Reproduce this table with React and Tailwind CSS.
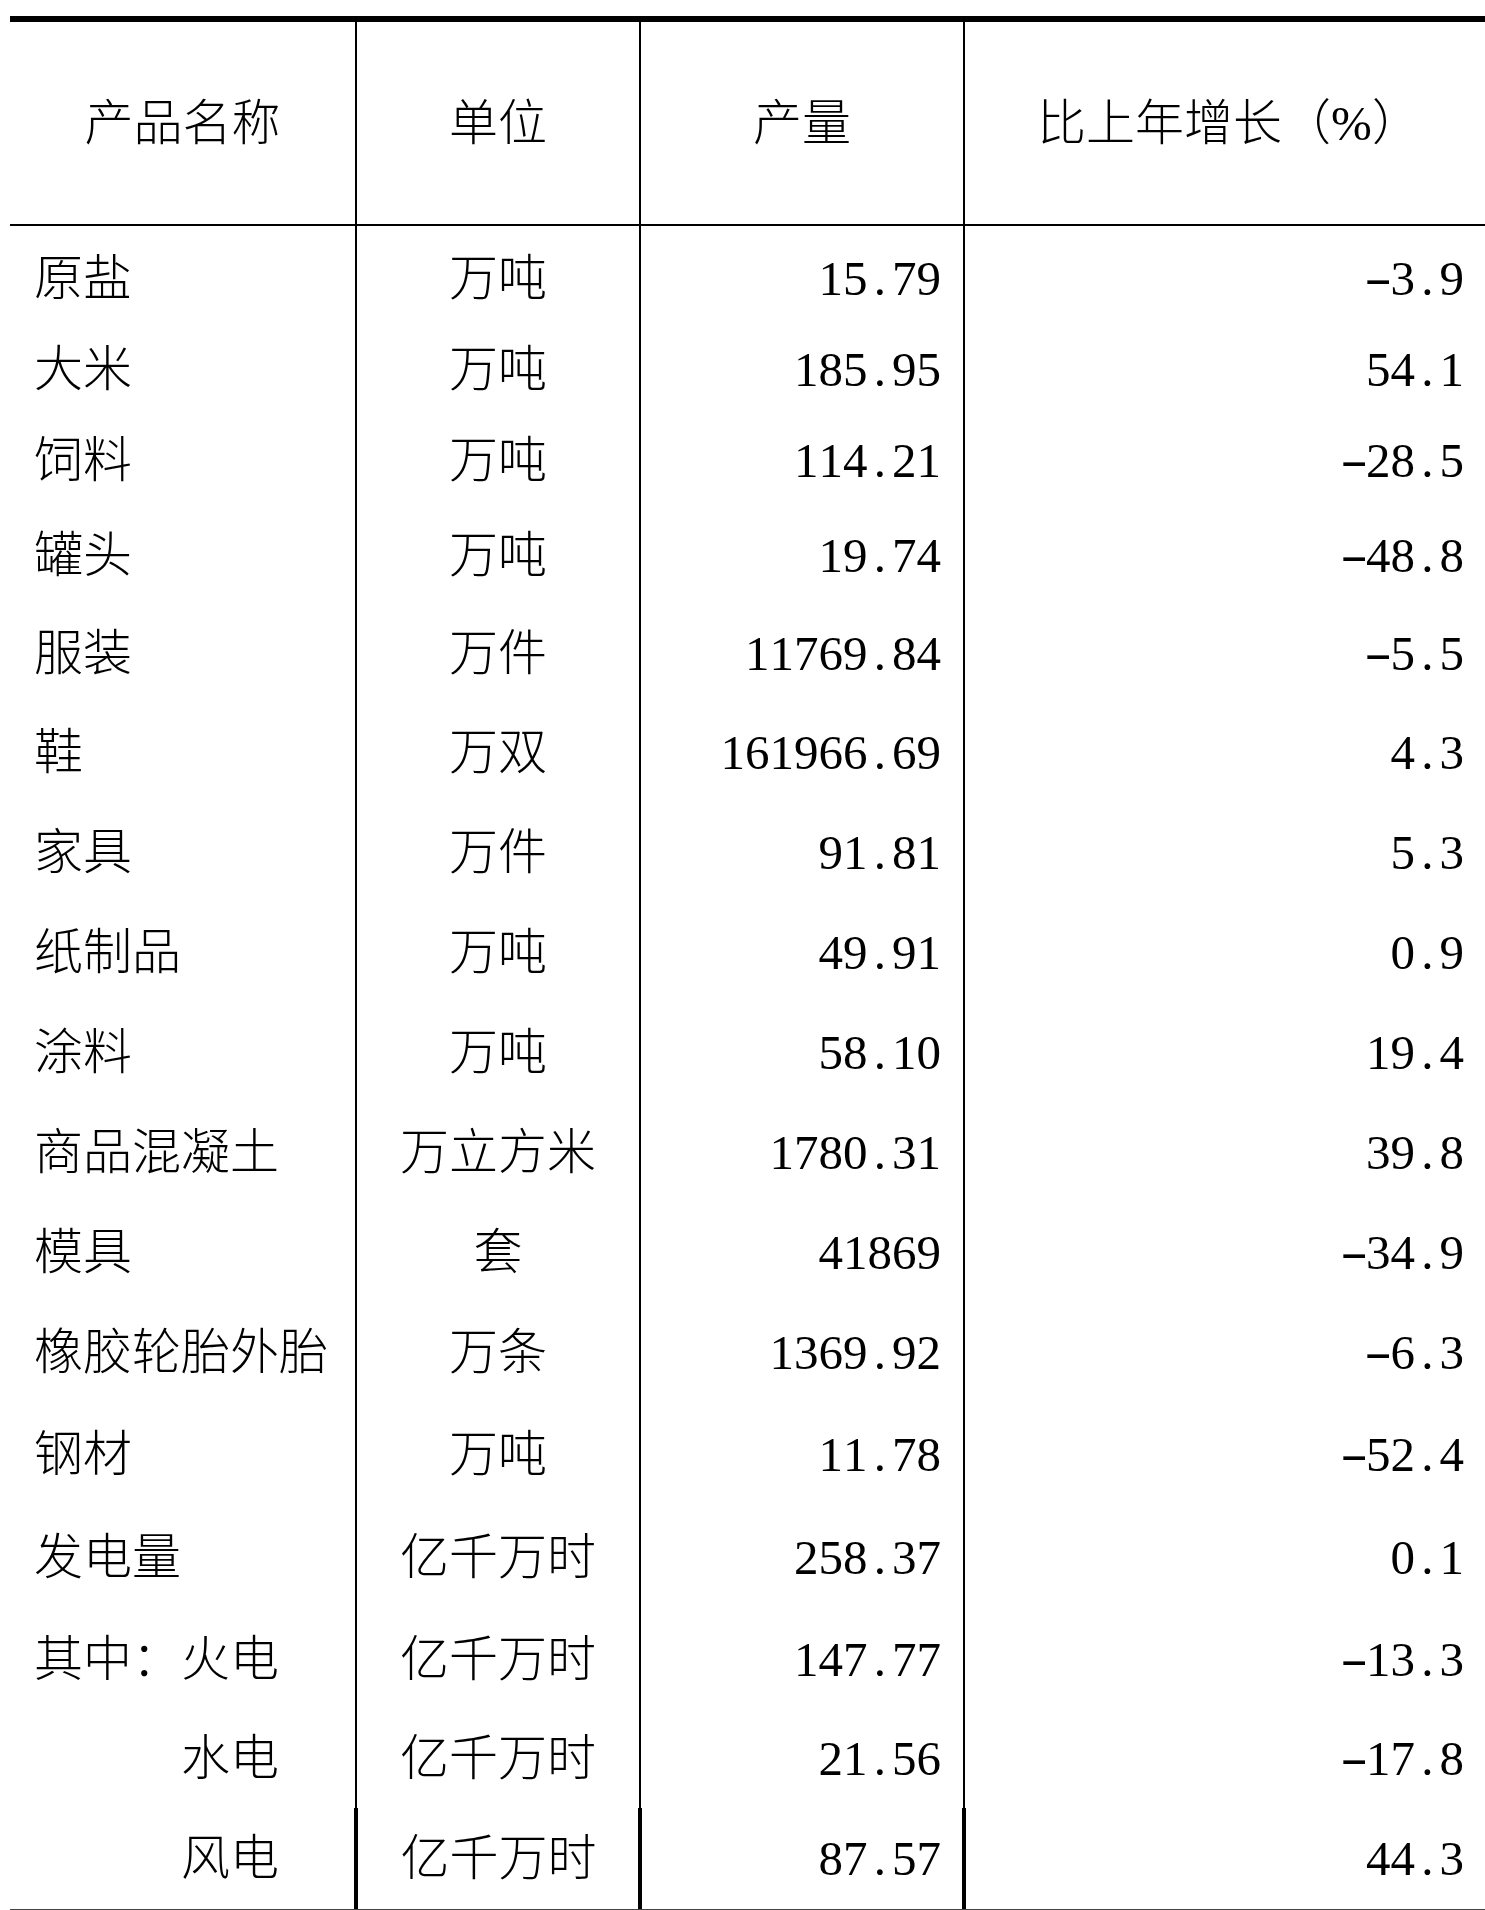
import React from 'react';

// 主要工业产品产量表
const rows = [
  { name: '原盐', unit: '万吨', output: '15.79', growth: '-3.9', h: 'h-[98px]', pad: 'pt-[6px]' },
  { name: '大米', unit: '万吨', output: '185.95', growth: '54.1', h: 'h-[90px]' },
  { name: '饲料', unit: '万吨', output: '114.21', growth: '-28.5', h: 'h-[93px]' },
  { name: '罐头', unit: '万吨', output: '19.74', growth: '-48.8', h: 'h-[97px]' },
  { name: '服装', unit: '万件', output: '11769.84', growth: '-5.5', h: 'h-[99px]' },
  { name: '鞋', unit: '万双', output: '161966.69', growth: '4.3', h: 'h-[99px]' },
  { name: '家具', unit: '万件', output: '91.81', growth: '5.3', h: 'h-[100px]' },
  { name: '纸制品', unit: '万吨', output: '49.91', growth: '0.9', h: 'h-[100px]' },
  { name: '涂料', unit: '万吨', output: '58.10', growth: '19.4', h: 'h-[100px]' },
  { name: '商品混凝土', unit: '万立方米', output: '1780.31', growth: '39.8', h: 'h-[100px]' },
  { name: '模具', unit: '套', output: '41869', growth: '-34.9', h: 'h-[100px]' },
  { name: '橡胶轮胎外胎', unit: '万条', output: '1369.92', growth: '-6.3', h: 'h-[101px]' },
  { name: '钢材', unit: '万吨', output: '11.78', growth: '-52.4', h: 'h-[103px]' },
  { name: '发电量', unit: '亿千万时', output: '258.37', growth: '0.1', h: 'h-[103px]' },
  { name: '其中：火电', unit: '亿千万时', output: '147.77', growth: '-13.3', h: 'h-[100px]' },
  { name: '水电', unit: '亿千万时', output: '21.56', growth: '-17.8', h: 'h-[99px]', indent: true },
  { name: '风电', unit: '亿千万时', output: '87.57', growth: '44.3', h: 'h-[101px]', indent: true, last: true },
];

const cjk = "font-['Liberation_Serif','Noto_Sans_CJK_SC',serif]";
const num = "font-['Liberation_Serif',serif]";

// half-width fixed cells, like the Song typeface digits
function Num({ value }) {
  return (
    <span className={`${num} flex`}>
      {value.split('').map((ch, i) => (
        <span
          key={i}
          className={
            ch === '-'
              ? 'inline-block w-[0.5em] text-center scale-x-[1.7] -translate-y-[1px]'
              : 'inline-block w-[0.5em] text-center'
          }
        >
          {ch}
        </span>
      ))}
    </span>
  );
}

export default function App() {
  return (
    <div className="bg-white w-[1485px] min-h-[1910px] pt-[16px] pl-[10px] text-black text-[49px] leading-none font-light">
      <div className="border-t-[6px] border-black">
        {/* Header */}
        <div className="grid grid-cols-[345px_284px_324px_1fr] h-[204px] border-b-2 border-black">
          <div className={`${cjk} flex items-center justify-center`}>产品名称</div>
          <div className={`${cjk} flex items-center justify-center border-l-2 border-black`}>单位</div>
          <div className={`${cjk} flex items-center justify-center border-l-2 border-black`}>产量</div>
          <div className={`${cjk} flex items-center justify-center border-l-2 border-black pl-[8px]`}>比上年增长（%）</div>
        </div>

        {/* Body */}
        {rows.map((r, i) => {
          const pad = r.pad || '';
          const line = r.last ? 'border-l-4 -ml-[1px]' : 'border-l-2';
          return (
            <div key={i} className={`grid grid-cols-[345px_284px_324px_1fr] ${r.h}`}>
              <div className={`${cjk} flex items-center pl-[24px] ${pad}`}>
                {r.indent ? <span className="pl-[3em]">{r.name}</span> : r.name}
              </div>
              <div className={`${cjk} flex items-center justify-center border-black ${line} ${pad}`}>
                {r.unit}
              </div>
              <div className={`flex items-center justify-end pr-[22px] border-black ${line} ${pad}`}>
                <Num value={r.output} />
              </div>
              <div className={`flex items-center justify-end pr-[21px] border-black ${line} ${pad}`}>
                <Num value={r.growth} />
              </div>
            </div>
          );
        })}
        <div className="border-t-2 border-[#444]" />
      </div>
    </div>
  );
}
